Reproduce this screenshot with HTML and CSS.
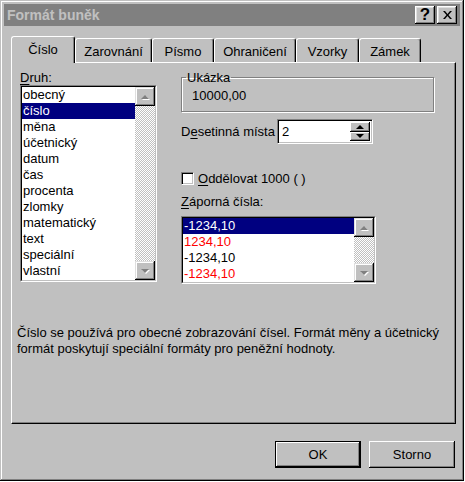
FILE: index.html
```html
<!DOCTYPE html>
<html lang="cs">
<head>
<meta charset="utf-8">
<title>Formát buněk</title>
<link rel="stylesheet" href="styles.css">
</head>
<body>
<div class="dialog">
  <div class="titlebar">
    <span class="title">Formát buněk</span>
    <div class="tbtns">
      <span class="tbtn help">?</span>
      <span class="tbtn close"><svg width="9" height="8" viewBox="0 0 9 8"><path d="M0 0h2l2.5 3 2.5-3h2L5.5 4 9 8H7L4.5 5 2 8H0l3.5-4z" fill="#000"/></svg></span>
    </div>
  </div>

  <div class="tabs">
    <div class="tab active t1">Číslo</div>
    <div class="tab t2">Zarovnání</div>
    <div class="tab t3">Písmo</div>
    <div class="tab t4">Ohraničení</div>
    <div class="tab t5">Vzorky</div>
    <div class="tab t6">Zámek</div>
  </div>

  <div class="panel">
    <div class="cols">
      <div class="left">
        <div class="lbl"><u>D</u>ruh:</div>
        <div class="listbox cat">
          <div class="lb-inner">
            <ul class="items">
              <li>obecný</li>
              <li class="sel">číslo</li>
              <li>měna</li>
              <li>účetnický</li>
              <li>datum</li>
              <li>čas</li>
              <li>procenta</li>
              <li>zlomky</li>
              <li>matematický</li>
              <li>text</li>
              <li>speciální</li>
              <li>vlastní</li>
            </ul>
            <div class="vscroll">
              <span class="sbtn up"></span>
              <span class="track"></span>
              <span class="sbtn down"></span>
            </div>
          </div>
        </div>
      </div>

      <div class="right">
        <fieldset class="group">
          <legend>Ukázka</legend>
          <div class="sample">10000,00</div>
        </fieldset>

        <div class="decrow">
          <span class="declbl">D<u>e</u>setinná místa</span>
          <div class="spin">
            <span class="spinval">2</span>
            <span class="spinbtns">
              <span class="spb up"></span>
              <span class="spb down"></span>
            </span>
          </div>
        </div>

        <div class="chk">
          <span class="box"></span>
          <span><u>O</u>ddělovat 1000 ( )</span>
        </div>

        <div class="lbl neglbl"><u>Z</u>áporná čísla:</div>
        <div class="listbox neg">
          <div class="lb-inner">
            <ul class="items">
              <li class="sel">-1234,10</li>
              <li class="red">1234,10</li>
              <li>-1234,10</li>
              <li class="red">-1234,10</li>
            </ul>
            <div class="vscroll">
              <span class="sbtn up"></span>
              <span class="track"></span>
              <span class="sbtn down"></span>
            </div>
          </div>
        </div>
      </div>
    </div>

    <p class="desc">Číslo se používá pro obecné zobrazování čísel. Formát měny a účetnický<br>formát poskytují speciální formáty pro peněžní hodnoty.</p>
  </div>

  <div class="buttons">
    <button class="btn default">OK</button>
    <button class="btn">Storno</button>
  </div>
</div>
</body>
</html>
```

FILE: styles.css
```css
* { box-sizing: border-box; }
html, body { margin: 0; padding: 0; }
body {
  background: #ffffff;
  font-family: "Liberation Sans", Arial, sans-serif;
  font-size: 13px;
  color: #000;
  width: 465px;
  height: 482px;
  overflow: hidden;
}
u { text-decoration: underline; text-underline-offset: 2px; }

.dialog {
  width: 464px;
  height: 481px;
  background: #c0c0c0;
  padding: 4px;
  box-shadow: inset -1px -1px #000, inset 1px 1px #c0c0c0, inset -2px -2px #808080, inset 2px 2px #fff;
  display: flex;
  flex-direction: column;
}

/* title bar */
.titlebar {
  height: 22px;
  flex: none;
  background: #808080;
  display: flex;
  align-items: center;
  justify-content: space-between;
  padding: 0 3px 0 3px;
}
.title { font-weight: bold; font-size: 14px; color: #c0c0c0; }
.tbtns { display: flex; gap: 2px; }
.tbtn {
  width: 20px;
  height: 18px;
  background: #c0c0c0;
  box-shadow: inset -1px -1px #000, inset 1px 1px #fff, inset -2px -2px #808080, inset 2px 2px #dfdfdf;
  display: flex;
  align-items: center;
  justify-content: center;
  font-weight: bold;
  font-size: 17px;
  line-height: 1;
}
.tbtn.help { padding-bottom: 1px; }

/* tabs */
.tabs {
  display: flex;
  align-items: flex-end;
  height: 26px;
  margin: 10px 0 0 9px;
  position: relative;
  z-index: 2;
  flex: none;
}
.tab {
  height: 24px;
  background: #c0c0c0;
  border-top: 1px solid #fff;
  border-left: 1px solid #fff;
  border-right: 1px solid #000;
  border-radius: 3px 3px 0 0;
  box-shadow: inset -1px 0 #808080;
  display: flex;
  align-items: center;
  justify-content: center;
  padding-top: 2px;
}
.tab.active {
  height: 27px;
  margin-left: -2px;
  margin-bottom: -1px;
  padding-top: 0;
  padding-bottom: 2px;
}
.t1 { width: 64px; }
.t2 { width: 77px; }
.t3 { width: 62px; }
.t4 { width: 82px; }
.t5 { width: 63px; }
.t6 { width: 62px; }

/* panel */
.panel {
  margin: 0 4px 0 7px;
  height: 362px;
  flex: none;
  border-top: 1px solid #fff;
  border-left: 1px solid #fff;
  border-right: 1px solid #000;
  border-bottom: 1px solid #000;
  box-shadow: inset -1px -1px #808080;
  padding: 7px 8px 0 8px;
  position: relative;
  z-index: 1;
}
.cols {
  display: grid;
  grid-template-columns: 137px 253px;
  column-gap: 24px;
  align-items: start;
}
.lbl { line-height: 15px; height: 15px; }

/* list boxes */
.listbox {
  border: 1px solid;
  border-color: #808080 #fff #fff #808080;
  background: #fff;
}
.lb-inner {
  border: 1px solid;
  border-color: #000 #c0c0c0 #c0c0c0 #000;
  display: flex;
  height: 100%;
}
.cat { width: 137px; height: 197px; }
.neg { width: 195px; height: 68px; margin-top: 6px; }
.items { list-style: none; margin: 0; padding: 0; flex: 1; }
.items li { height: 16px; line-height: 16px; padding-left: 1px; white-space: nowrap; }
.items li.sel { background: #000080; color: #fff; }
.items li.red { color: #ff0000; }
.vscroll { width: 20px; display: flex; flex-direction: column; flex: none; }
.track {
  flex: 1;
  background: repeating-conic-gradient(#fff 0 25%, #c0c0c0 0 50%) 0 0 / 2px 2px;
}
.sbtn {
  height: 19px;
  flex: none;
  background: #c0c0c0;
  box-shadow: inset -1px -1px #000, inset 1px 1px #dfdfdf, inset -2px -2px #808080, inset 2px 2px #fff;
  display: flex;
  align-items: center;
  justify-content: center;
}
.sbtn::before {
  content: "";
  width: 0; height: 0;
  border-left: 4px solid transparent;
  border-right: 4px solid transparent;
  filter: drop-shadow(1px 1px 0 #fff);
}
.sbtn.up::before { border-bottom: 4px solid #808080; }
.sbtn.down::before { border-top: 4px solid #808080; }

/* sample group */
.group {
  margin: 0;
  width: 253px;
  padding: 3px 0 7px 0;
  border: 1px solid #808080;
  box-shadow: 1px 1px 0 #fff, inset 1px 1px 0 #fff;
}
.group legend { padding: 0 1px; margin-left: 4px; line-height: 15px; }
.sample { line-height: 16px; padding-left: 10px; }

/* decimal places */
.decrow { display: flex; align-items: center; margin-top: 7px; }
.declbl { width: 96px; flex: none; }
.spin {
  width: 96px;
  height: 25px;
  background: #fff;
  border: 1px solid;
  border-color: #808080 #fff #fff #808080;
  box-shadow: inset 1px 1px #000, inset -1px -1px #c0c0c0;
  padding: 2px 2px 2px 2px;
  display: flex;
}
.spinval { flex: 1; line-height: 19px; padding-left: 2px; }
.spinbtns { width: 20px; display: flex; flex-direction: column; }
.spb {
  flex: 1;
  background: #c0c0c0;
  box-shadow: inset -1px -1px #000, inset 1px 1px #fff, inset -2px -2px #808080;
  display: flex;
  align-items: center;
  justify-content: center;
}
.spb::before {
  content: "";
  width: 0; height: 0;
  border-left: 4px solid transparent;
  border-right: 4px solid transparent;
}
.spb.up::before { border-bottom: 4px solid #000; }
.spb.down::before { border-top: 4px solid #000; }

/* checkbox */
.chk { display: flex; align-items: center; gap: 4px; margin-top: 26px; height: 16px; }
.box {
  width: 13px;
  height: 13px;
  flex: none;
  background: #fff;
  border: 1px solid;
  border-color: #808080 #fff #fff #808080;
  box-shadow: inset 1px 1px #000, inset -1px -1px #c0c0c0;
}
.neglbl { margin-top: 8px; line-height: 16px; height: 16px; }

/* description */
.desc { margin: 41px 0 0 -3px; line-height: 16px; white-space: nowrap; }

/* buttons */
.buttons {
  display: flex;
  justify-content: flex-end;
  gap: 8px;
  margin: 17px 5px 0 0;
  flex: none;
}
.btn {
  width: 86px;
  height: 27px;
  font: inherit;
  color: #000;
  background: #c0c0c0;
  border: 0;
  padding: 0;
  box-shadow: inset -1px -1px #000, inset 1px 1px #fff, inset -2px -2px #808080;
}
.btn.default {
  border: 1px solid #000;
  box-shadow: inset -1px -1px #000, inset 1px 1px #fff, inset -2px -2px #808080;
}
```
